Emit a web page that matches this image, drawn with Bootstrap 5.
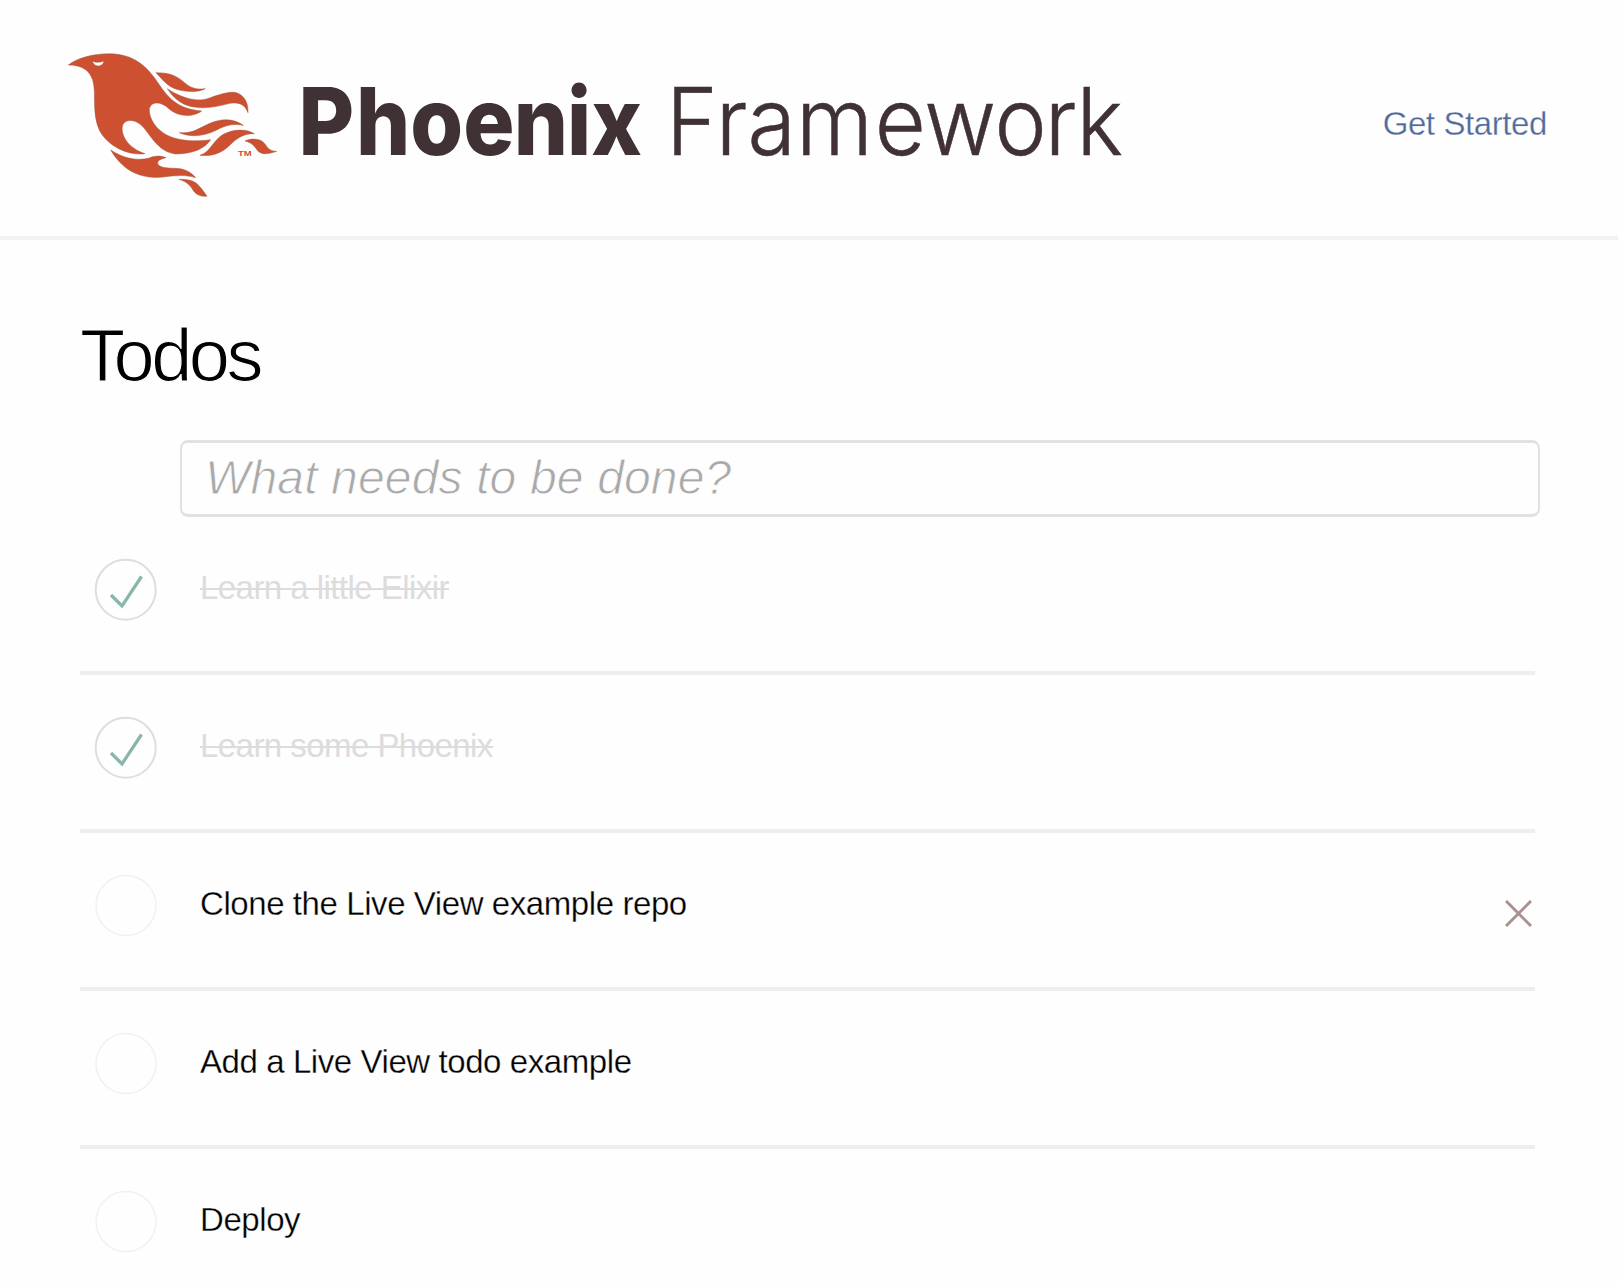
<!DOCTYPE html>
<html lang="en">
<head>
<meta charset="utf-8">
<title>Phoenix Framework · Todos</title>
<link href="https://cdn.jsdelivr.net/npm/bootstrap@5.3.0/dist/css/bootstrap.min.css" rel="stylesheet">
<style>
body{font-family:"Liberation Sans",Arial,sans-serif;color:#000;background:#fefefe;overflow:hidden}
.site-header{height:240px;border-bottom:4px solid #f2f2f2;padding:40px 71px 0 60px}
.site-logo{width:1080px;height:165px;overflow:visible;flex:none}
.start-link{font-size:33px;line-height:40px;letter-spacing:-.4px;color:#506a9b;text-decoration:none;margin-top:64px;-webkit-text-stroke:.3px #fefefe}
.page-body{padding:74px 78px 0 80px}
.page-title{font-size:74px;line-height:84px;letter-spacing:-3.5px;font-weight:400;margin:0 0 42px;-webkit-text-stroke:1.2px #fefefe}
.new-todo{margin-left:100px;width:1360px;height:77px;border:3px solid #e2e2e2;border-left-width:2px;border-right-width:2px;border-radius:8px;font-size:48px;letter-spacing:.15px;padding:0 24px 3px 23px;color:#000;background:#fefefe}
.new-todo::placeholder{color:#a9a9a9;font-style:italic;opacity:1;-webkit-text-stroke:.9px #fefefe}
.todo-list{width:1455px}
.todo-row{height:158px;border-bottom:4px solid #eee;padding:41px 2px 0 14px}
.todo-row:last-child{border-bottom:0}
.todo-row svg{flex:none}
.todo-text{font-size:33px;line-height:40px;letter-spacing:-.42px;margin:10px 0 0 42px;-webkit-text-stroke:.3px #fefefe}
.is-done .todo-text{color:#dcdcdc;letter-spacing:-.55px;text-decoration:line-through;text-decoration-thickness:2px;-webkit-text-stroke:0}
.remove-icon{margin:26px 1px 0 auto}
</style>
<script src="https://cdn.jsdelivr.net/npm/bootstrap@5.3.0/dist/js/bootstrap.bundle.min.js"></script>
</head>
<body>
<header class="site-header d-flex justify-content-between align-items-start">
<svg class="site-logo" viewBox="0 0 1080 165" role="img" aria-label="Phoenix Framework">
<g transform="scale(.33333)" fill="#cd5030" stroke="#a4553f" stroke-width="1.5">
<path fill-rule="evenodd" d="M25 75C60 48 120 38 165 42C230 48 265 85 295 130C325 175 355 208 425 213C400 232 355 232 325 205C305 185 275 182 268 205C265 235 290 270 320 285C360 305 410 305 452 299C435 325 400 342 345 342C300 335 280 300 255 268C235 240 200 232 188 255C180 285 205 325 255 341C200 348 140 315 118 270C95 220 110 160 98 120C90 95 70 75 25 75ZM97 63C99 70 103 76 112 78C122 78 130 74 132 63C120 68 105 68 97 63Z"/>
<path d="M288 98C330 98 350 108 370 125C390 142 405 150 436 146C415 157 380 157 350 148C320 138 305 115 288 98Z"/>
<path d="M322 146C350 165 400 188 440 177C480 162 505 155 525 157C555 165 565 190 564 218C555 195 540 185 510 190C470 200 440 206 410 202C370 198 345 180 322 146Z"/>
<path d="M358 278C400 282 420 262 450 250C485 235 520 235 550 256C520 250 495 256 470 270C430 290 390 292 358 278Z"/>
<path d="M420 346C450 338 460 300 490 283C520 268 555 265 583 281C550 280 530 295 510 315C485 340 455 350 420 346Z"/>
<path d="M555 303C580 292 605 298 615 312C625 328 635 334 650 334C625 343 605 345 593 332C580 315 575 308 555 303Z"/>
<path d="M152 330C190 355 230 363 265 355C285 347 300 346 318 353C295 358 290 365 295 375C310 388 340 382 365 387C385 392 398 402 407 413C370 402 340 408 300 412C230 415 185 385 152 330Z"/>
<path d="M357 418C385 418 400 422 412 432C425 445 433 457 441 469C420 470 405 462 397 447C388 432 375 424 357 418Z"/>
<text x="534" y="348" font-size="23" font-weight="700" textLength="41" lengthAdjust="spacingAndGlyphs" stroke="none">TM</text>
</g>
<g fill="#3f3134" font-family="Inter, sans-serif" font-size="94">
<text x="238.500" y="114.5" dx="0 2 0 0 -1 -1 0" font-weight="800" textLength="343.500" lengthAdjust="spacingAndGlyphs">Phoenix</text>
<text x="606" y="114.5" dx="0 1 0 0 2 0 0 -2 -1" font-weight="300" textLength="457" lengthAdjust="spacingAndGlyphs" stroke="#3f3134" stroke-width=".5">Framework</text>
</g>
</svg>
<a class="start-link text-nowrap" href="#">Get Started</a>
</header>
<main class="page-body">
<h1 class="page-title">Todos</h1>
<input class="new-todo d-block" type="text" placeholder="What needs to be done?" aria-label="New todo">
<ul class="todo-list list-unstyled mb-0">
<li class="todo-row is-done d-flex align-items-start"><svg width="64" height="64" fill="none"><circle cx="31.700" cy="31.700" r="30" stroke="#dcdfde" stroke-width="2"/><path d="M17 37L28 48L47.500 18.500" stroke="#8ab5ab" stroke-width="3.200"/></svg><span class="todo-text">Learn a little Elixir</span></li>
<li class="todo-row is-done d-flex align-items-start"><svg width="64" height="64" fill="none"><circle cx="31.700" cy="31.700" r="30" stroke="#dcdfde" stroke-width="2"/><path d="M17 37L28 48L47.500 18.500" stroke="#8ab5ab" stroke-width="3.200"/></svg><span class="todo-text">Learn some Phoenix</span></li>
<li class="todo-row d-flex align-items-start"><svg width="64" height="64" fill="none"><circle cx="32" cy="31.500" r="30" stroke="#f1f1f1" stroke-width="1.500"/></svg><span class="todo-text">Clone the Live View example repo</span><svg class="remove-icon" width="27" height="27"><path d="M1 1L26 26M26 1L1 26" stroke="#a8918f" stroke-width="3"/></svg></li>
<li class="todo-row d-flex align-items-start"><svg width="64" height="64" fill="none"><circle cx="32" cy="31.500" r="30" stroke="#f1f1f1" stroke-width="1.500"/></svg><span class="todo-text">Add a Live View todo example</span></li>
<li class="todo-row d-flex align-items-start"><svg width="64" height="64" fill="none"><circle cx="32" cy="31.500" r="30" stroke="#f1f1f1" stroke-width="1.500"/></svg><span class="todo-text">Deploy</span></li>
</ul>
</main>
</body>
</html>
